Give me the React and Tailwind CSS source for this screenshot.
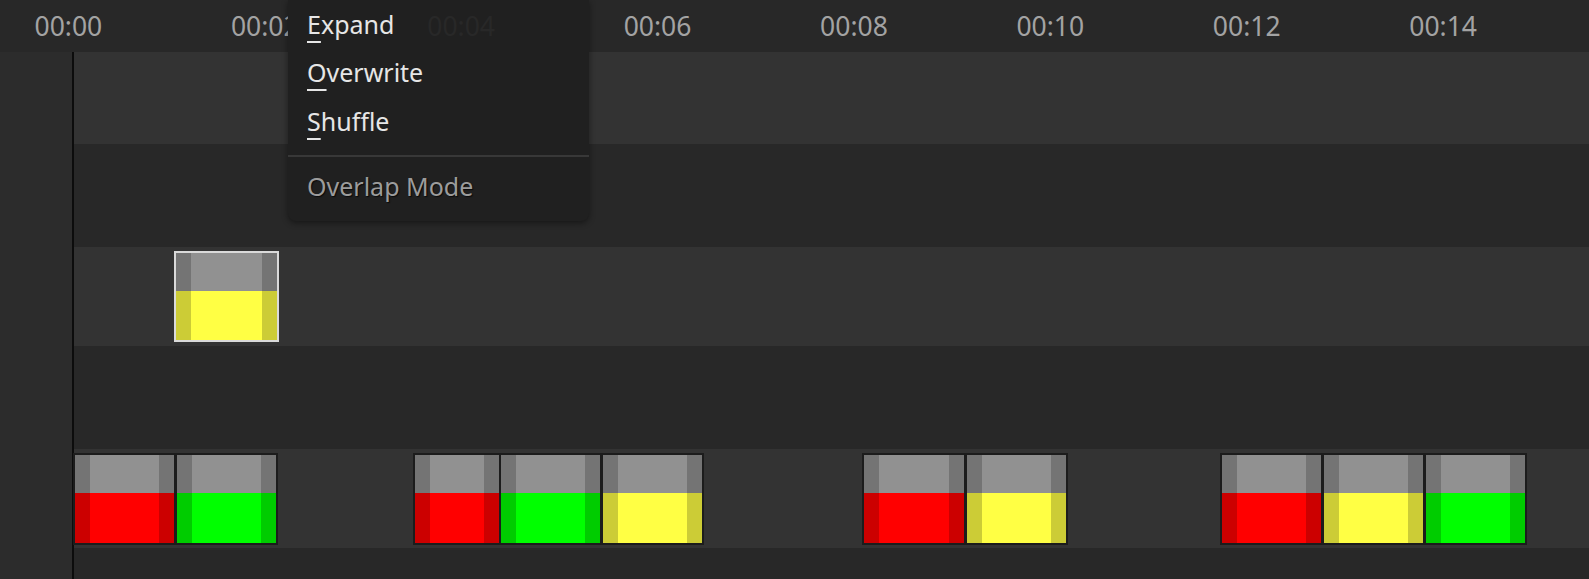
import React from 'react';

const LABELS = ['00:00', '00:02', '00:04', '00:06', '00:08', '00:10', '00:12', '00:14'];

const COLORS = {
    red: 'bg-[#ff0000]',
    green: 'bg-[#00ff00]',
    yellow: 'bg-[#ffff44]',
};

// clip x is relative to the track area (starts right after the playhead line)
const TRACKS = [
    { h: 'h-[92px]', light: true, clips: [] },
    { h: 'h-[103px]', light: false, clips: [] },
    { h: 'h-[99px]', light: true, clips: [{ x: 100, w: 105, c: 'yellow', sel: true }] },
    { h: 'h-[103px]', light: false, clips: [] },
    {
        h: 'h-[99px]', light: true, clips: [
            { x: -1.5, w: 103.5, c: 'red' },
            { x: 100.5, w: 103.5, c: 'green' },
            { x: 338.5, w: 88, c: 'red' },
            { x: 424.5, w: 103.5, c: 'green' },
            { x: 526.5, w: 103.5, c: 'yellow' },
            { x: 788, w: 104, c: 'red' },
            { x: 890.5, w: 103.5, c: 'yellow' },
            { x: 1145.5, w: 103.5, c: 'red' },
            { x: 1247.5, w: 103.5, c: 'yellow' },
            { x: 1349.5, w: 103.5, c: 'green' },
        ]
    },
    { h: 'flex-1', light: false, clips: [] },
];

const Clip = ({ clip }) => (
    <div
        className={`absolute flex flex-col border-2 ${clip.sel ? 'top-[4px] h-[91px] border-[#dadada] z-[1]' : 'top-[3.5px] h-[92px] border-[#1c1c1c]'}`}
        style={{ left: clip.x, width: clip.w }}
    >
        <div className="h-[38px] bg-[#919191]" />
        <div className={`flex-1 ${COLORS[clip.c]}`} />
        <div className="absolute inset-y-0 left-0 w-[15px] bg-black/20" />
        <div className="absolute inset-y-0 right-0 w-[15px] bg-black/20" />
    </div>
);

const MenuItem = ({ first, rest }) => (
    <div className="h-[48px] leading-[48px] text-[#e6e6e6]">
        <span className="underline decoration-[1.5px] underline-offset-[7px]">{first}</span>{rest}
    </div>
);

export default function App() {
    return (
        <div className="relative w-[1589px] h-[579px] overflow-hidden bg-[#282828] font-['Noto_Sans',sans-serif] flex flex-col">
            {/* Ruler */}
            <div className="h-[52px] shrink-0 bg-[#282828] flex items-center pl-[34.5px]">
                {LABELS.map((l) => (
                    <div
                        key={l}
                        className={`w-[196.4px] shrink-0 text-[26.5px] leading-[52px] ${l === '00:04' ? 'relative z-20 text-[#282828]' : 'text-[#a3a3a3]'}`}
                    >
                        {l}
                    </div>
                ))}
            </div>

            {/* Tracks */}
            <div className="flex-1 flex">
                <div className="w-[72px] shrink-0 bg-[#2c2c2c]" />
                <div className="w-[2px] shrink-0 bg-[#0c0c0c]" />
                <div className="flex-1 flex flex-col">
                    {TRACKS.map((t, i) => (
                        <div key={i} className={`relative ${t.h} ${t.light ? 'bg-[#333333]' : 'bg-[#282828]'}`}>
                            {t.clips.map((c, j) => <Clip key={j} clip={c} />)}
                        </div>
                    ))}
                </div>
            </div>

            {/* Popup menu */}
            <div className="absolute left-[288px] top-0 z-10 w-[301px] h-[221px] bg-[#202020] rounded-b-[8px] shadow-[0_2px_6px_rgba(0,0,0,0.45)] text-[25px]">
                <div className="pl-[19px]">
                    <MenuItem first="E" rest="xpand" />
                    <MenuItem first="O" rest="verwrite" />
                    <div className="mt-[1px]">
                        <MenuItem first="S" rest="huffle" />
                    </div>
                </div>
                <div className="mt-[10px] h-[2px] bg-[#383838]" />
                <div className="mt-[5px] pl-[19px] h-[48px] leading-[48px] text-[#9c9c9c] [text-shadow:1px_1px_1px_#0a0a0a]">
                    Overlap Mode
                </div>
            </div>
        </div>
    );
}
